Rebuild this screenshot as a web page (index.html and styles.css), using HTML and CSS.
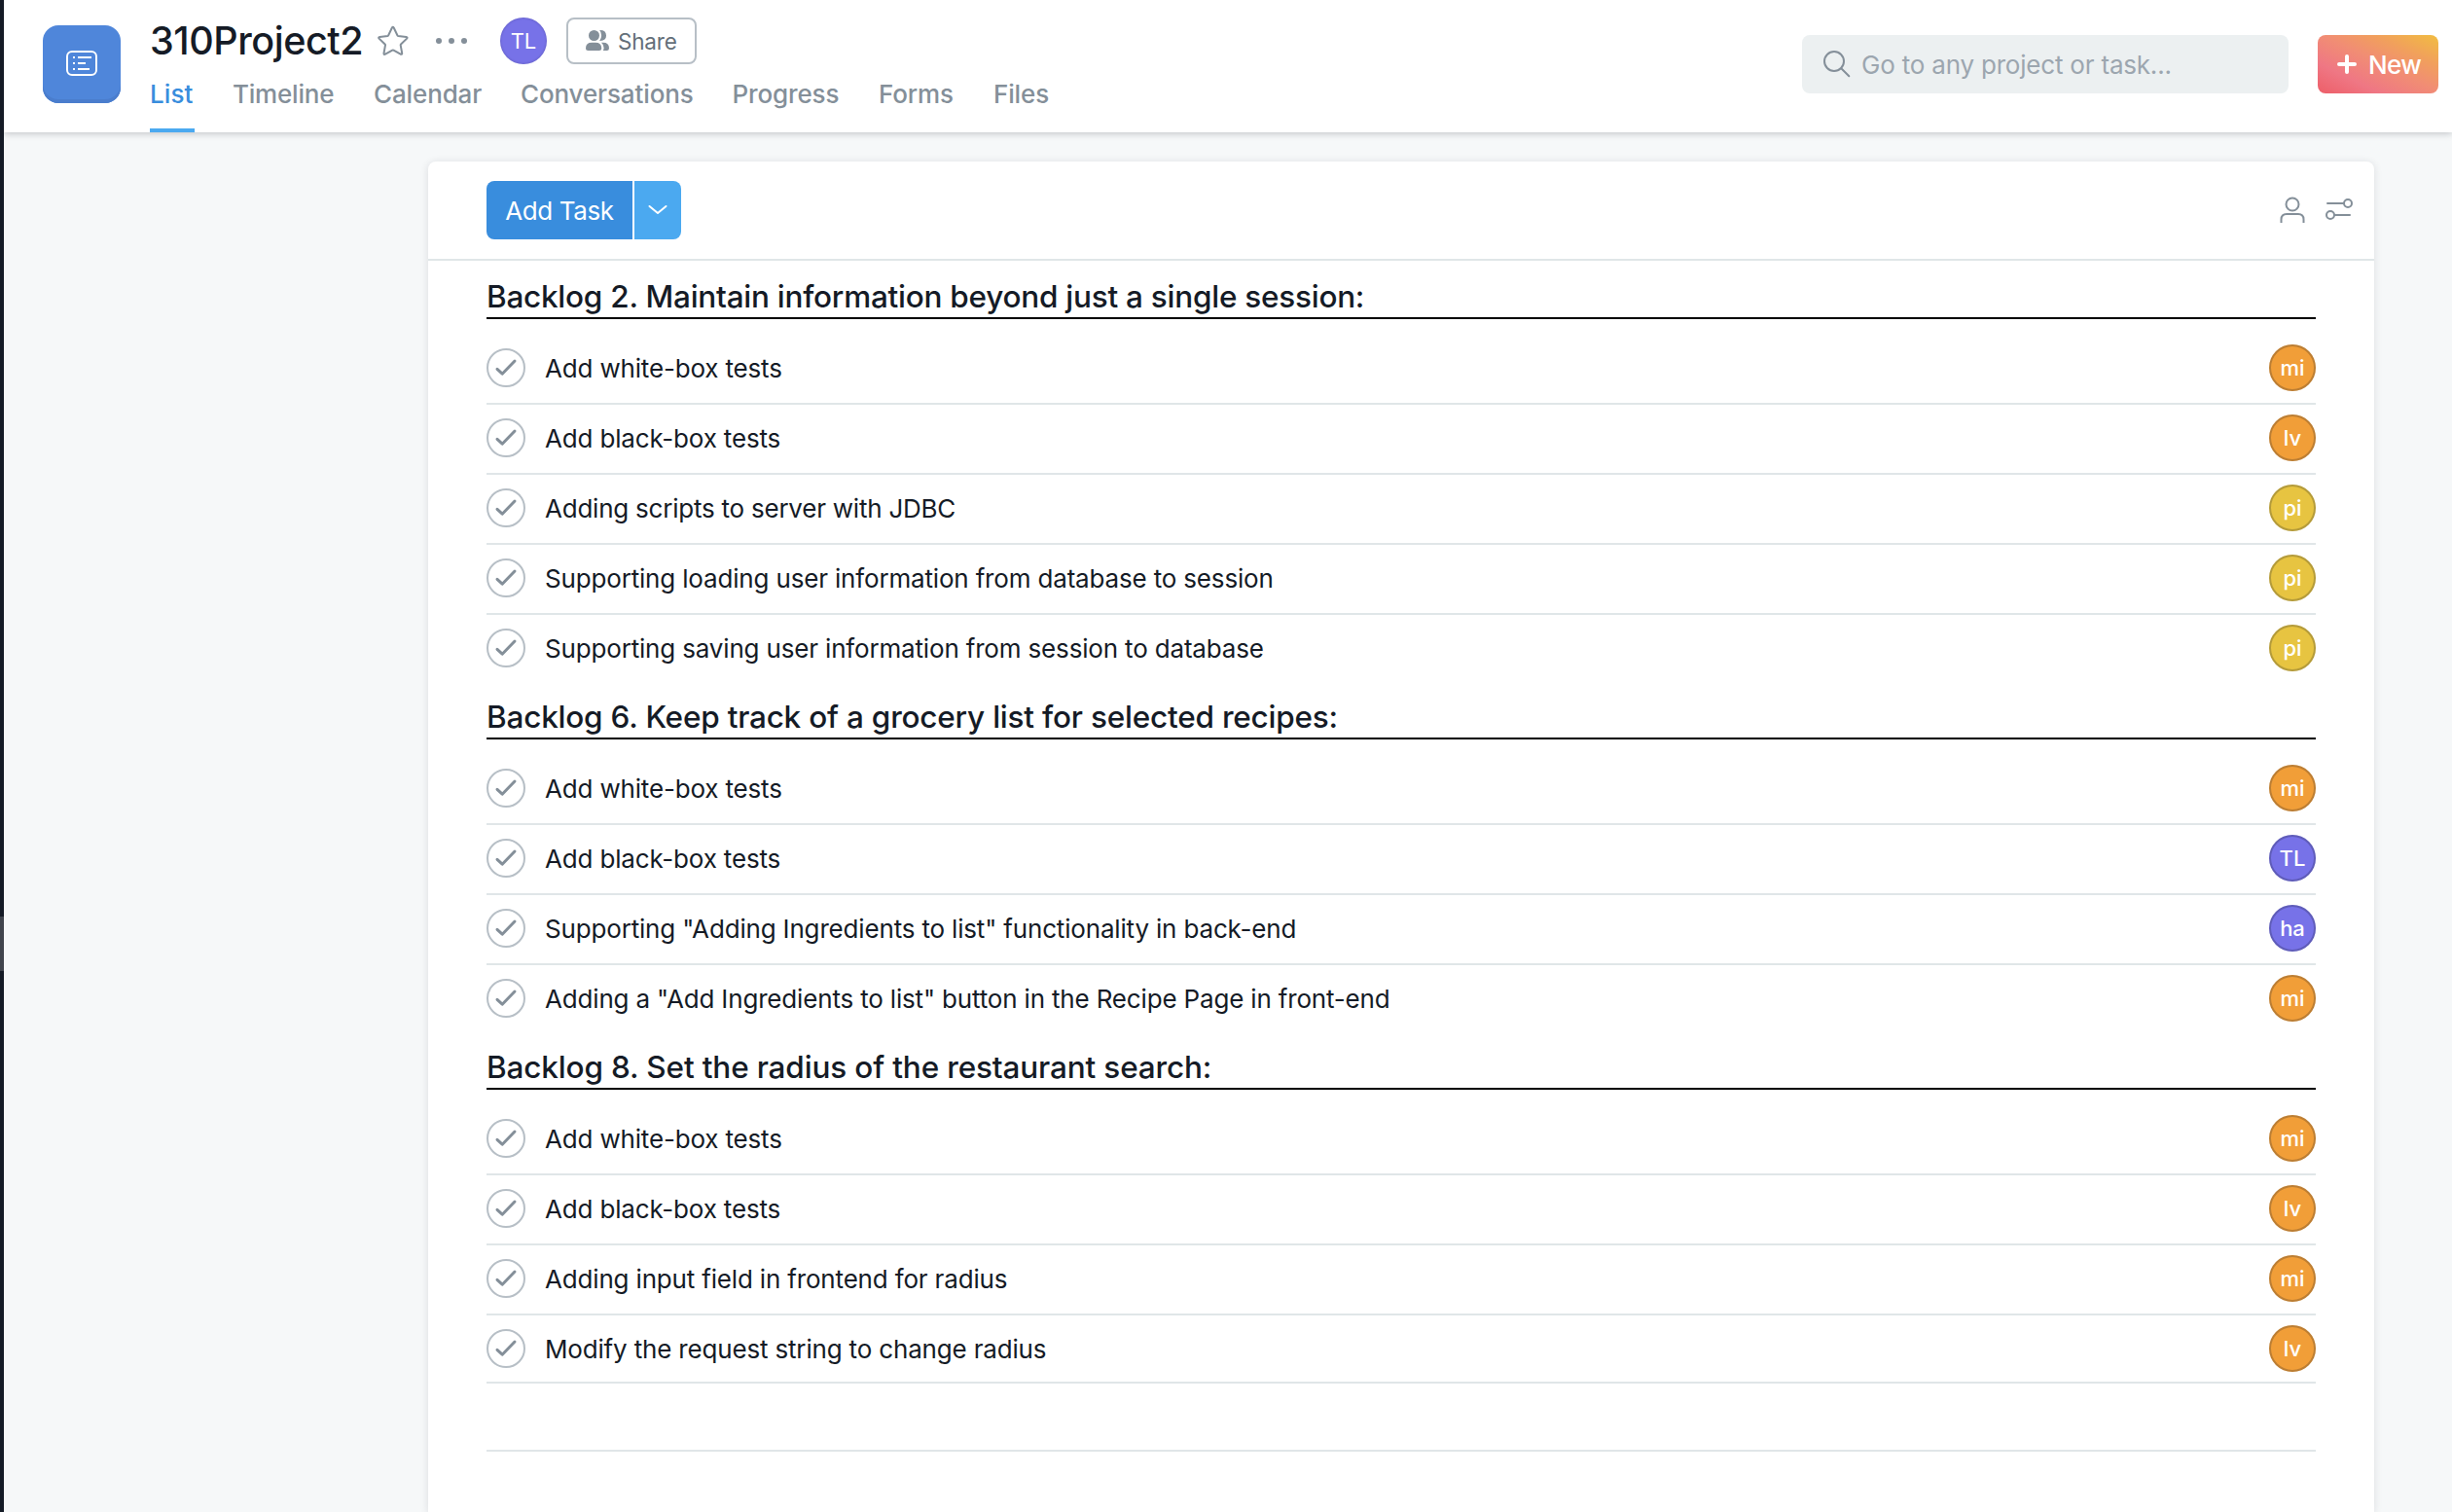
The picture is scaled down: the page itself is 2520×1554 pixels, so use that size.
FILE: index.html
```
<!DOCTYPE html>
<html lang="en">
<head>
<meta charset="utf-8">
<title>310Project2 - List</title>
<link rel="stylesheet" href="styles.css">
</head>
<body>
<svg class="defs" width="0" height="0" aria-hidden="true">
  <symbol id="check" viewBox="0 0 40 40">
    <circle cx="20" cy="20" r="19" fill="none" stroke="#b7bfc6" stroke-width="2"/>
    <path d="M11 21.3l5.2 4.900L29 13" fill="none" stroke="#848f99" stroke-width="3" stroke-linecap="round" stroke-linejoin="round"/>
  </symbol>
</svg>
<div class="app">
  <aside class="rail"><div class="rail-thumb"></div></aside>
  <div class="main">
    <header class="header">
      <div class="project-icon">
        <svg width="32" height="26" viewBox="0 0 32 26" fill="none" stroke="#fff" stroke-width="2">
          <rect x="1" y="1" width="30" height="24" rx="5"/>
          <path d="M7 7h2M12 7h14M7 13h2M12 13h8M7 19h2M12 19h12"/>
        </svg>
      </div>
      <div class="project">
        <div class="title-row">
          <h1 class="title">310Project2</h1>
          <svg class="star" width="32" height="32" viewBox="0 0 32 32" fill="none" stroke="#848f99" stroke-width="2" stroke-linejoin="round">
            <path d="M14.9 2.5q.9-1.5 1.8 0L20.4 10.3q.2.5.8.6l8.3 1q1.7.3.6 1.7L24 19.5q-.4.4-.3.9l1.500 8.300q.1 1.600-1.500 1L16.500 25.700q-.6-.3-1.200 0L8 29.700q-1.600.7-1.500-1L8 20.400q.1-.5-.3-.9L1.600 13.600q-1.100-1.400.6-1.700l8.200-1q.6-.1.800-.6z"/>
          </svg>
          <svg class="dots" width="32" height="6" viewBox="0 0 32 6" fill="#848f99"><circle cx="3" cy="3" r="3"/><circle cx="16" cy="3" r="3"/><circle cx="29" cy="3" r="3"/></svg>
          <span class="avatar purple soft">TL</span>
          <button class="share">
            <svg width="24" height="22" viewBox="0 0 24 22" fill="#848f99">
              <ellipse cx="8.500" cy="5.500" rx="5.500" ry="5.500"/>
              <path d="M14.200.1q6.600-.3 6.800 5.400t-6.800 5.400q1.900-2.100 1.900-5.400T14.200.1z"/>
              <path d="M0 18.500q0-5.800 6.200-5.800h3.800q6.200 0 6.200 5.800 0 2.500-2.600 2.500H2.600Q0 21 0 18.500z"/>
              <path d="M16 12.700h1.800q6.200 0 6.200 5.800 0 2.500-2.400 2.500h-3.800q.8-1.100.8-2.800 0-3.400-2.600-5.500z"/>
            </svg>
            <span>Share</span>
          </button>
        </div>
        <nav class="tabs">
          <a class="tab t-list active">List</a>
          <a class="tab t-timeline">Timeline</a>
          <a class="tab t-calendar">Calendar</a>
          <a class="tab t-conversations">Conversations</a>
          <a class="tab t-progress">Progress</a>
          <a class="tab t-forms">Forms</a>
          <a class="tab t-files">Files</a>
        </nav>
      </div>
      <div class="search">
        <svg width="28" height="28" viewBox="0 0 28 28" fill="none" stroke="#848f99" stroke-width="2" stroke-linecap="round"><circle cx="11" cy="11" r="10"/><path d="M18.500 18.500l7.800 7.700"/></svg>
        <span>Go to any project or task...</span>
      </div>
      <button class="new">
        <svg width="20" height="20" viewBox="0 0 20 20" fill="none" stroke="#fff" stroke-width="4" stroke-linecap="round"><path d="M10 2v16M2 10h16"/></svg>
        <span>New</span>
      </button>
    </header>
    <main class="card">
      <div class="toolbar">
        <button class="add">Add Task</button>
        <button class="add-more"><svg width="20" height="12" viewBox="0 0 20 12" fill="none" stroke="#fff" stroke-width="2" stroke-linecap="round" stroke-linejoin="round"><path d="M1.500 2l8.500 7 8.500-7"/></svg></button>
        <svg class="person" width="26" height="28" viewBox="0 0 26 28" fill="none" stroke="#848f99" stroke-width="2"><circle cx="13" cy="8" r="6.500"/><path d="M1.500 27v-3.500q0-5.500 5.500-5.500h12q5.500 0 5.500 5.500V27"/></svg>
        <svg class="filter" width="28" height="24" viewBox="0 0 28 24" fill="none" stroke="#848f99" stroke-width="2" stroke-linecap="round"><circle cx="23" cy="6" r="4"/><path d="M2 6h17M9.500 18H25"/><circle cx="5" cy="18" r="4"/></svg>
      </div>
      <section class="section s1">
        <h2 class="heading">Backlog 2. Maintain information beyond just a single session:</h2>
        <ul class="tasks">
          <li class="task"><svg class="check"><use href="#check"/></svg><span class="name">Add white-box tests</span><span class="avatar orange">mi</span></li>
          <li class="task"><svg class="check"><use href="#check"/></svg><span class="name">Add black-box tests</span><span class="avatar orange">lv</span></li>
          <li class="task"><svg class="check"><use href="#check"/></svg><span class="name tight">Adding scripts to server with JDBC</span><span class="avatar yellow">pi</span></li>
          <li class="task"><svg class="check"><use href="#check"/></svg><span class="name">Supporting loading user information from database to session</span><span class="avatar yellow">pi</span></li>
          <li class="task"><svg class="check"><use href="#check"/></svg><span class="name">Supporting saving user information from session to database</span><span class="avatar yellow">pi</span></li>
        </ul>
      </section>
      <section class="section s2">
        <h2 class="heading">Backlog 6. Keep track of a grocery list for selected recipes:</h2>
        <ul class="tasks">
          <li class="task"><svg class="check"><use href="#check"/></svg><span class="name">Add white-box tests</span><span class="avatar orange">mi</span></li>
          <li class="task"><svg class="check"><use href="#check"/></svg><span class="name">Add black-box tests</span><span class="avatar purple">TL</span></li>
          <li class="task"><svg class="check"><use href="#check"/></svg><span class="name">Supporting "Adding Ingredients to list" functionality in back-end</span><span class="avatar purple">ha</span></li>
          <li class="task"><svg class="check"><use href="#check"/></svg><span class="name">Adding a "Add Ingredients to list" button in the Recipe Page in front-end</span><span class="avatar orange">mi</span></li>
        </ul>
      </section>
      <section class="section s3">
        <h2 class="heading">Backlog 8. Set the radius of the restaurant search:</h2>
        <ul class="tasks">
          <li class="task"><svg class="check"><use href="#check"/></svg><span class="name">Add white-box tests</span><span class="avatar orange">mi</span></li>
          <li class="task"><svg class="check"><use href="#check"/></svg><span class="name">Add black-box tests</span><span class="avatar orange">lv</span></li>
          <li class="task"><svg class="check"><use href="#check"/></svg><span class="name">Adding input field in frontend for radius</span><span class="avatar orange">mi</span></li>
          <li class="task end"><svg class="check"><use href="#check"/></svg><span class="name">Modify the request string to change radius</span><span class="avatar orange">lv</span></li>
          <li class="task blank"></li>
        </ul>
      </section>
    </main>
  </div>
</div>
</body>
</html>
```
FILE: styles.css
```
* { box-sizing: border-box; }
body {
  margin: 0;
  background: #f6f8f9;
  color: #151b26;
  font-family: Inter, "Liberation Sans", sans-serif;
  font-size: 26px;
}
button { font: inherit; border: 0; padding: 0; margin: 0; }
h1, h2 { margin: 0; font-weight: 500; }
ul { margin: 0; padding: 0; list-style: none; }
svg { display: block; flex: none; }
.defs { position: absolute; }

.app { display: flex; height: 1554px; overflow: hidden; }
.rail { flex: none; width: 4px; background: #151b26; padding-top: 942px; }
.rail-thumb { height: 56px; background: #40444d; }
.main { flex: 1; min-width: 0; display: flex; flex-direction: column; }

.header {
  flex: none;
  display: flex;
  align-items: flex-start;
  height: 136px;
  padding: 0 14px 0 40px;
  background: #fff;
  box-shadow: 0 1px 7px rgba(21, 27, 38, .26);
  clip-path: inset(0 0 -20px 0);
}
.project-icon {
  flex: none;
  width: 80px;
  height: 80px;
  margin: 26px 30px 0 0;
  padding-bottom: 2px;
  display: flex;
  align-items: center;
  justify-content: center;
  border-radius: 16px;
  background: #4f86da;
  box-shadow: inset 0 -4px 0 #4a7dcd;
}
.project { flex: 1; }
.title-row { display: flex; align-items: center; height: 84px; }
.title { width: 234px; font-size: 39.5px; letter-spacing: -.45px; line-height: 48px; white-space: nowrap; }
.dots { margin: 0 34px 0 28px; }
.share {
  display: flex;
  align-items: center;
  gap: 9px;
  width: 134px;
  height: 48px;
  margin-left: 20px;
  padding-left: 18px;
  border: 2px solid #b7bfc6;
  border-radius: 8px;
  background: #fff;
  color: #646f79;
  font-size: 22.5px;
  letter-spacing: -.2px;
}
.tabs { display: flex; gap: 40px; }
.tab {
  height: 52px;
  line-height: 25px;
  color: #848f99;
  font-weight: 500;
  letter-spacing: -.13px;
  white-space: nowrap;
}
.tab.active { color: #398ddd; border-bottom: 4px solid #4ba9f0; }
.t-list { width: 46px; letter-spacing: .1px; }
.t-timeline { width: 105px; margin-left: -1px; letter-spacing: -.2px; }
.t-calendar { width: 111px; }
.t-conversations { width: 177.5px; }
.t-progress { width: 110.5px; }
.t-forms { width: 78px; }

.search {
  display: flex;
  align-items: center;
  gap: 11px;
  width: 500px;
  height: 60px;
  margin: 36px 30px 0 0;
  padding-left: 22px;
  border-radius: 8px;
  background: #ecf0f1;
  color: #9ca6af;
  letter-spacing: -.2px;
}
.search span { padding-top: 1px; }
.new {
  display: flex;
  align-items: center;
  gap: 12px;
  width: 124px;
  height: 60px;
  margin-top: 36px;
  padding-left: 20px;
  border-radius: 8px;
  background: linear-gradient(to top right, #ed5e68 0, #ef7784 26%, #f18d74 52%, #f1a05c 74%, #f1bd41 100%);
  color: #fff;
  font-weight: 500;
  letter-spacing: -.6px;
}

.card {
  flex: 1;
  width: 2000px;
  margin: 30px 0 0 436px;
  border-radius: 8px 8px 0 0;
  background: #fff;
  box-shadow: 0 1px 8px rgba(21, 27, 38, .12);
}
.toolbar {
  display: flex;
  align-items: center;
  height: 102px;
  padding: 0 22px 0 60px;
  border-bottom: 2px solid #e0e6e8;
}
.add {
  width: 150px;
  height: 60px;
  margin-right: 2px;
  border-radius: 8px 0 0 8px;
  background: #398ddd;
  color: #fff;
  letter-spacing: -.4px;
}
.add-more {
  display: flex;
  align-items: center;
  justify-content: center;
  width: 48px;
  height: 60px;
  border-radius: 0 8px 8px 0;
  background: #4ba9f0;
}
.person { margin: 0 21px 0 auto; }
.filter { margin-bottom: 2px; }

.section { padding: 0 60px; }
.heading {
  height: 56px;
  padding-top: 15px;
  border-bottom: 2px solid #000;
  font-size: 31.5px;
  line-height: 36px;
  white-space: nowrap;
}
.s1 .heading { height: 60px; padding-top: 19px; letter-spacing: -.25px; }
.s2 .heading { letter-spacing: -.21px; }
.s3 .heading { letter-spacing: -.15px; }
.tasks { padding-top: 16px; }
.task {
  display: flex;
  align-items: center;
  height: 72px;
  padding-bottom: 2px;
  border-bottom: 2px solid #e0e6e8;
}
.task:last-child { padding-bottom: 4px; border-bottom: 0; }
.task.end { height: 70px; padding-bottom: 0; }
.task.blank { height: 70px; border-bottom: 2px solid #e0e6e8; }
.check { width: 40px; height: 40px; margin-right: 20px; }
.name { flex: 1; letter-spacing: -.17px; white-space: nowrap; }
.name.tight { letter-spacing: -.23px; }

.avatar {
  flex: none;
  display: flex;
  align-items: center;
  justify-content: center;
  width: 48px;
  height: 48px;
  border-radius: 50%;
  color: #fff;
  font-size: 22px;
  font-weight: 500;
  box-shadow: inset 0 0 0 2px rgba(21, 27, 38, .24);
}
.avatar.soft { box-shadow: inset 0 0 2px 1px rgba(21, 27, 38, .12); font-weight: 400; }
.orange { background: #f19e38; }
.yellow { background: #e7c441; }
.purple { background: #7772e8; }
```
